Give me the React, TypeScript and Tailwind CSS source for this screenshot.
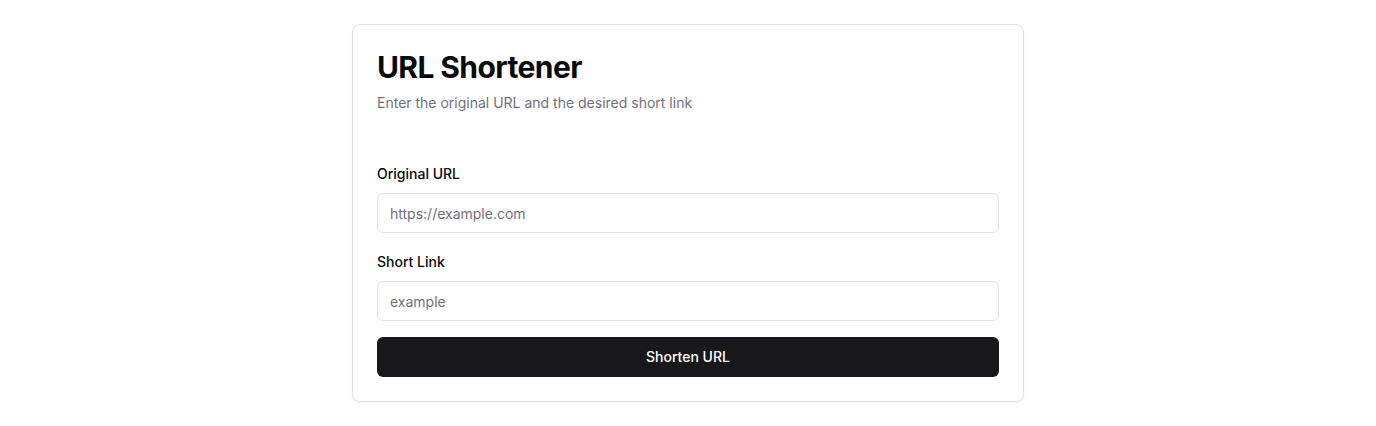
import { useState } from 'react';

export default function App() {
  const [url, setUrl] = useState('');
  const [slug, setSlug] = useState('');

  return (
    <div className="min-h-screen bg-white py-6 px-4 font-['Inter',sans-serif] text-[#09090b]">
      <div className="mx-auto w-full max-w-2xl rounded-lg border border-[#e4e4e7] bg-white shadow-xs">
        <div className="flex flex-col gap-2 p-6">
          <h1 className="text-3xl leading-9 font-bold tracking-[-0.6px]">URL Shortener</h1>
          <p className="text-sm text-[#71717a]">Enter the original URL and the desired short link</p>
        </div>

        <form className="flex flex-col px-6 pb-6 pt-[27px]" onSubmit={(e) => e.preventDefault()}>
          <div className="flex flex-col">
            <label htmlFor="url" className="text-sm leading-5 font-medium mb-[9px]">
              Original URL
            </label>
            <input
              id="url"
              value={url}
              onChange={(e) => setUrl(e.target.value)}
              placeholder="https://example.com"
              className="h-10 w-full rounded-md border border-[#e4e4e7] bg-white px-3 text-sm placeholder:text-[#71717a] outline-none"
            />
          </div>

          <div className="mt-[19px] flex flex-col">
            <label htmlFor="slug" className="text-sm leading-5 font-medium mb-[9px]">
              Short Link
            </label>
            <input
              id="slug"
              value={slug}
              onChange={(e) => setSlug(e.target.value)}
              placeholder="example"
              className="h-10 w-full rounded-md border border-[#e4e4e7] bg-white px-3 text-sm placeholder:text-[#71717a] outline-none"
            />
          </div>

          <button
            type="submit"
            className="mt-4 h-10 w-full rounded-md bg-[#18181b] text-sm font-medium text-white"
          >
            Shorten URL
          </button>
        </form>
      </div>
    </div>
  );
}
